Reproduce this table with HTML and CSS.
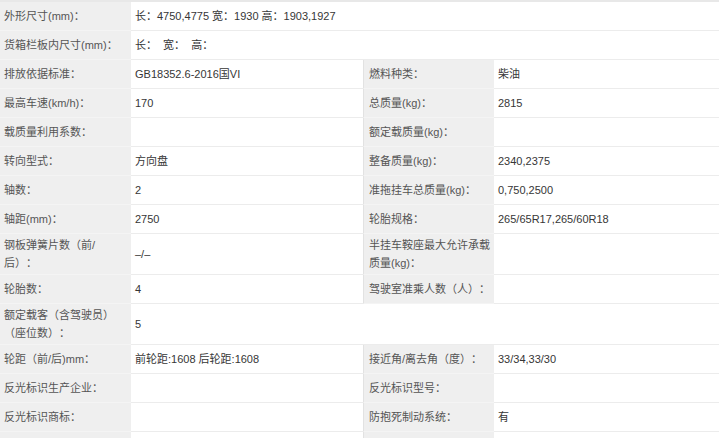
FILE: index.html
```html
<!DOCTYPE html>
<html lang="zh-CN">
<head>
<meta charset="utf-8">
<title>参数</title>
<link rel="stylesheet" href="styles.css">
</head>
<body>
<div class="spec">
  <div class="lb">外形尺寸(mm)：</div>
  <div class="val wide">长：4750,4775 宽：1930 高：1903,1927</div>

  <div class="lb">货箱栏板内尺寸(mm)：</div>
  <div class="val wide">长：&nbsp; 宽：&nbsp; 高：</div>

  <div class="lb">排放依据标准：</div>
  <div class="val">GB18352.6-2016国VI</div>
  <div class="lb lb2">燃料种类：</div>
  <div class="val">柴油</div>

  <div class="lb">最高车速(km/h)：</div>
  <div class="val">170</div>
  <div class="lb lb2">总质量(kg)：</div>
  <div class="val">2815</div>

  <div class="lb">载质量利用系数：</div>
  <div class="val"></div>
  <div class="lb lb2">额定载质量(kg)：</div>
  <div class="val"></div>

  <div class="lb">转向型式：</div>
  <div class="val">方向盘</div>
  <div class="lb lb2">整备质量(kg)：</div>
  <div class="val">2340,2375</div>

  <div class="lb">轴数：</div>
  <div class="val">2</div>
  <div class="lb lb2">准拖挂车总质量(kg)：</div>
  <div class="val">0,750,2500</div>

  <div class="lb">轴距(mm)：</div>
  <div class="val">2750</div>
  <div class="lb lb2">轮胎规格：</div>
  <div class="val">265/65R17,265/60R18</div>

  <div class="lb">钢板弹簧片数（前/后）：</div>
  <div class="val">–/–</div>
  <div class="lb lb2">半挂车鞍座最大允许承载质量(kg)：</div>
  <div class="val"></div>

  <div class="lb">轮胎数：</div>
  <div class="val">4</div>
  <div class="lb lb2">驾驶室准乘人数（人）：</div>
  <div class="val"></div>

  <div class="lb">额定载客（含驾驶员）（座位数）：</div>
  <div class="val wide">5</div>

  <div class="lb">轮距（前/后)mm：</div>
  <div class="val">前轮距:1608 后轮距:1608</div>
  <div class="lb lb2">接近角/离去角（度）：</div>
  <div class="val">33/34,33/30</div>

  <div class="lb">反光标识生产企业：</div>
  <div class="val"></div>
  <div class="lb lb2">反光标识型号：</div>
  <div class="val"></div>

  <div class="lb">反光标识商标：</div>
  <div class="val"></div>
  <div class="lb lb2">防抱死制动系统：</div>
  <div class="val">有</div>

  <div class="lb"></div>
  <div class="val"></div>
  <div class="lb lb2"></div>
  <div class="val"></div>
</div>
</body>
</html>
```

FILE: styles.css
```css
html, body {
  margin: 0;
  padding: 0;
  background: #ffffff;
}

body {
  font-family: "Liberation Sans", "Noto Sans CJK SC", sans-serif;
  font-size: 11px;
  text-spacing-trim: space-all;
}

.spec {
  width: 719px;
  display: grid;
  grid-template-columns: 131px 232px 131px 1fr;
  border-top: 2px solid #e8e8e8;
}

.lb, .val {
  box-sizing: border-box;
  min-height: 29px;
  padding: 2px 8px 2px 4px;
  line-height: 18px;
  display: flex;
  align-items: center;
  border-bottom: 1px solid #ececec;
}

.lb {
  background: #efefef;
  color: #555555;
  border-bottom-color: #f4f4f4;
}

.lb2 {
  border-left: 1px solid #e2e2e2;
  padding-left: 5px;
  padding-right: 2px;
}

.val {
  color: #363636;
  background: #ffffff;
}

.wide {
  grid-column: 2 / 5;
}
```
